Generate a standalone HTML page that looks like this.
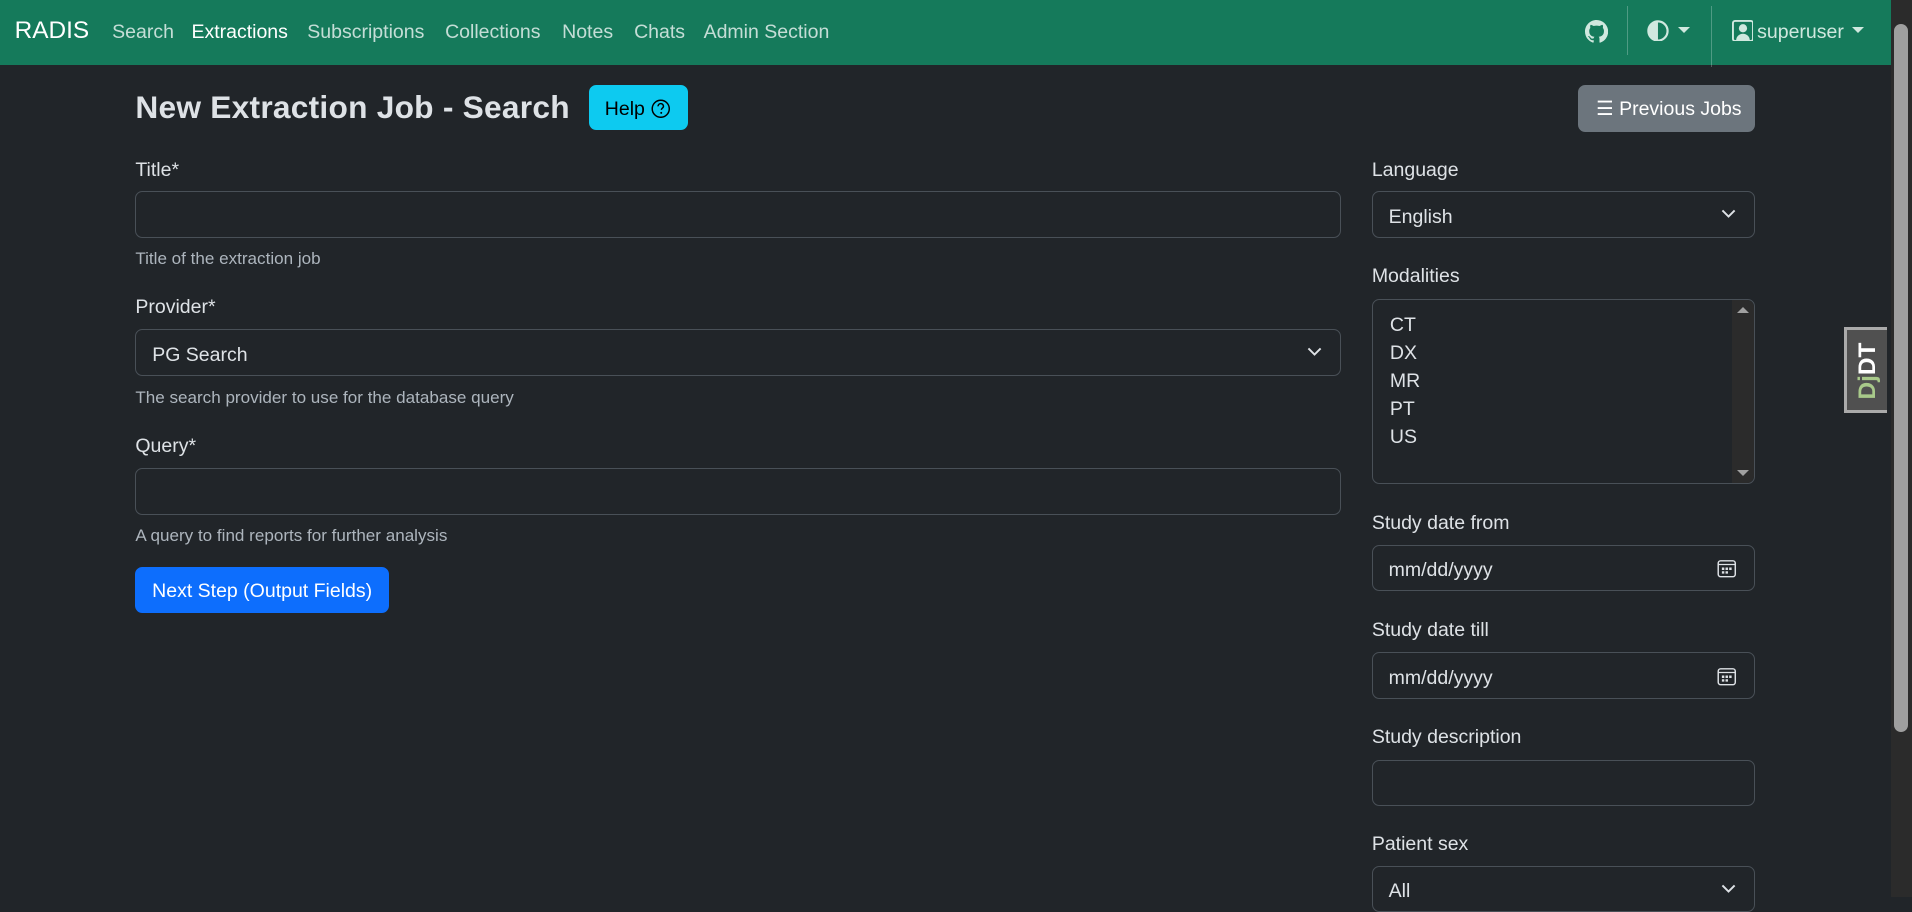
<!DOCTYPE html>
<html><head><meta charset="utf-8"><style>
html,body{margin:0;padding:0;}
body{width:1568px;height:736px;overflow:hidden;background:#212529;zoom:1.21939;position:relative;font-family:"Liberation Sans",sans-serif;color:#dee2e6;font-size:16px;}
.a{position:absolute;}
.nav{left:0;top:0;width:1551px;height:53px;background:#157a5b;}
.nav span{position:absolute;top:17px;font-size:16px;color:rgba(255,255,255,.75);}
.lbl{position:absolute;font-size:16px;color:#dee2e6;}
.help{position:absolute;font-size:14px;color:#adb5bd;}
.inp{position:absolute;border:1px solid #495057;border-radius:6px;background:#212529;box-sizing:border-box;}
.inp .t{position:absolute;left:13px;top:11px;font-size:16px;color:#dee2e6;}
.chev{position:absolute;right:14px;top:13px;}
</style></head><body>
<div class="a nav">
<span style="left:12px;top:14px;font-size:20px;color:#fff">RADIS</span>
<span style="left:92px">Search</span>
<span style="left:157px;color:#fff">Extractions</span>
<span style="left:252px">Subscriptions</span>
<span style="left:365px">Collections</span>
<span style="left:461px">Notes</span>
<span style="left:520px">Chats</span>
<span style="left:577px">Admin Section</span>
<svg class="a" style="left:1300px;top:16px" width="19" height="19" viewBox="0 0 16 16"><path fill="#d0e8df" d="M8 0C3.58 0 0 3.580 0 8c0 3.540 2.290 6.530 5.470 7.590.4.07.55-.17.55-.38v-1.330c-2.230.48-2.700-1.070-2.700-1.070-.36-.92-.89-1.170-.89-1.170-.73-.5.06-.49.06-.49.8.06 1.230.82 1.230.82.72 1.230 1.870.87 2.330.67.07-.52.28-.87.5-1.070-1.780-.2-3.640-.89-3.640-3.950 0-.87.31-1.590.82-2.150-.08-.2-.36-1.020.08-2.120 0 0 .67-.21 2.200.82.64-.18 1.320-.27 2-.27.68 0 1.360.09 2 .27 1.530-1.040 2.200-.82 2.200-.82.44 1.100.16 1.920.08 2.120.51.56.82 1.270.82 2.150 0 3.070-1.870 3.750-3.650 3.950.29.25.54.73.54 1.480v2.200c0 .21.15.46.55.38A8.010 8.010 0 0016 8c0-4.420-3.580-8-8-8z"/></svg>
<div class="a" style="left:1334px;top:5px;width:1px;height:40px;background:rgba(255,255,255,.25)"></div>
<svg class="a" style="left:1351px;top:16px" width="18" height="18" viewBox="0 0 16 16"><circle cx="8" cy="8" r="7" fill="none" stroke="#d0e8df" stroke-width="1.6"/><path d="M8 1a7 7 0 000 14z" fill="#d0e8df"/></svg>
<div class="a" style="left:1376px;top:22px;border:5px solid transparent;border-top-color:#d0e8df;border-bottom:0"></div>
<div class="a" style="left:1403px;top:5px;width:1px;height:50px;background:rgba(255,255,255,.25)"></div>
<svg class="a" style="left:1420px;top:16px" width="18" height="18" viewBox="0 0 16 16"><rect x=".7" y=".7" width="14.6" height="14.6" rx="1.5" fill="none" stroke="#d0e8df" stroke-width="1.4"/><circle cx="8" cy="6" r="3" fill="#d0e8df"/><path d="M3 15c0-3 2.300-5 5-5s5 2 5 5z" fill="#d0e8df"/></svg>
<span style="left:1441px;color:#d0e8df">superuser</span>
<div class="a" style="left:1519px;top:22px;border:5px solid transparent;border-top-color:#d0e8df;border-bottom:0"></div>
</div>
<div class="a" style="left:1551px;top:0;width:17px;height:736px;background:#2b2b2b"></div>
<div class="a" style="left:1553px;top:20px;width:12px;height:580px;border-radius:6px;background:#9f9f9f"></div>

<div class="a" style="left:111px;top:73px;font-size:26px;font-weight:bold;color:#dee2e6;letter-spacing:0.2px">New Extraction Job - Search</div>
<div class="a" style="left:483px;top:70px;width:81px;height:37px;background:#0dcaf0;border-radius:6px;color:#000;font-size:16px;line-height:40px;"><span style="margin-left:13px">Help</span>
<svg class="a" style="left:51px;top:11px" width="16" height="16" viewBox="0 0 16 16"><circle cx="8" cy="8" r="7" fill="none" stroke="#000" stroke-width="1.2"/><path d="M5.8 6a2.200 2.200 0 114.300.6c-.3.8-1.600 1.100-1.600 2.300" fill="none" stroke="#000" stroke-width="1.2"/><circle cx="8.4" cy="11.4" r=".8"/></svg></div>
<div class="a" style="left:1294px;top:70px;width:145px;height:38px;background:#6c757d;border-radius:6px;color:#fff;font-size:16px;line-height:40px;"><span style="margin-left:15px">☰ Previous Jobs</span></div>

<div class="lbl" style="left:111px;top:130px">Title*</div>
<div class="inp" style="left:111px;top:157px;width:989px;height:38px"></div>
<div class="help" style="left:111px;top:204px">Title of the extraction job</div>
<div class="lbl" style="left:111px;top:243px">Provider*</div>
<div class="inp" style="left:111px;top:270px;width:989px;height:38px"><span class="t">PG Search</span><svg class="chev" width="14" height="10" viewBox="0 0 14 10"><path d="M2 2l5 5 5-5" fill="none" stroke="#dee2e6" stroke-width="1.6"/></svg></div>
<div class="help" style="left:111px;top:318px">The search provider to use for the database query</div>
<div class="lbl" style="left:111px;top:357px">Query*</div>
<div class="inp" style="left:111px;top:384px;width:989px;height:38px"></div>
<div class="help" style="left:111px;top:431px">A query to find reports for further analysis</div>
<div class="a" style="left:111px;top:465px;width:208px;height:38px;background:#0d6efd;border-radius:6px;color:#fff;line-height:40px;text-align:center">Next Step (Output Fields)</div>

<div class="lbl" style="left:1125px;top:130px">Language</div>
<div class="inp" style="left:1125px;top:157px;width:314px;height:38px"><span class="t">English</span><svg class="chev" width="14" height="10" viewBox="0 0 14 10"><path d="M2 2l5 5 5-5" fill="none" stroke="#dee2e6" stroke-width="1.6"/></svg></div>
<div class="lbl" style="left:1125px;top:217px">Modalities</div>
<div class="inp" style="left:1125px;top:245px;width:314px;height:152px">
<div class="a" style="left:14px;top:9px;line-height:23px">CT<br>DX<br>MR<br>PT<br>US</div>
<div class="a" style="right:0;top:0;width:18px;height:150px;background:#2b2b2b;border-radius:0 6px 6px 0"></div>
<div class="a" style="right:4px;top:6px;border:5px solid transparent;border-bottom-color:#a0a0a0;border-top:0"></div>
<div class="a" style="right:4px;bottom:6px;border:5px solid transparent;border-top-color:#a0a0a0;border-bottom:0"></div>
</div>
<div class="lbl" style="left:1125px;top:420px">Study date from</div>
<div class="inp" style="left:1125px;top:447px;width:314px;height:38px"><span class="t">mm/dd/yyyy</span><svg class="a" style="right:14px;top:11px" width="16" height="16" viewBox="0 0 16 16"><rect x="1" y="1.5" width="14" height="13" rx="2" fill="none" stroke="#dee2e6" stroke-width="1.2"/><path d="M1 4.5h14" stroke="#dee2e6"/><path d="M4 7h2v2H4zM7 7h2v2H7zM10 7h2v2h-2zM4 10h2v2H4zM7 10h2v2H7z" fill="#dee2e6"/></svg></div>
<div class="lbl" style="left:1125px;top:508px">Study date till</div>
<div class="inp" style="left:1125px;top:535px;width:314px;height:38px"><span class="t">mm/dd/yyyy</span><svg class="a" style="right:14px;top:11px" width="16" height="16" viewBox="0 0 16 16"><rect x="1" y="1.5" width="14" height="13" rx="2" fill="none" stroke="#dee2e6" stroke-width="1.2"/><path d="M1 4.5h14" stroke="#dee2e6"/><path d="M4 7h2v2H4zM7 7h2v2H7zM10 7h2v2h-2zM4 10h2v2H4zM7 10h2v2H7z" fill="#dee2e6"/></svg></div>
<div class="lbl" style="left:1125px;top:595px">Study description</div>
<div class="inp" style="left:1125px;top:623px;width:314px;height:38px"></div>
<div class="lbl" style="left:1125px;top:683px">Patient sex</div>
<div class="inp" style="left:1125px;top:710px;width:314px;height:38px"><span class="t">All</span><svg class="chev" width="14" height="10" viewBox="0 0 14 10"><path d="M2 2l5 5 5-5" fill="none" stroke="#dee2e6" stroke-width="1.6"/></svg></div>

<div class="a" style="left:1512px;top:268px;width:33px;height:66px;border:3px solid #aaa;border-right:0;background:#505050;overflow:hidden">
<div class="a" style="left:-14px;top:22px;transform:rotate(-90deg);font-weight:bold;font-size:20px;color:#fff;width:62px;text-align:center"><span style="color:#a8c98a">Dj</span>DT</div>
</div>
</body></html>
